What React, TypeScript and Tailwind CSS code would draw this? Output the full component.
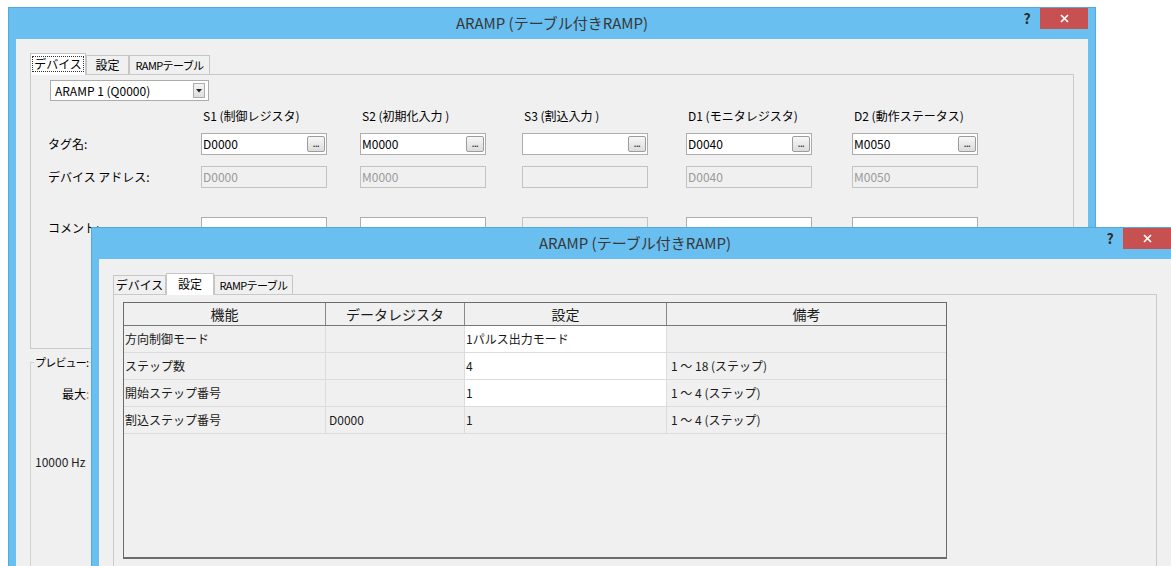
import type { ReactNode } from 'react'

const TITLE = 'ARAMP (テーブル付きRAMP)'

interface TabDef {
  label: string
  w: string
  active?: boolean
  focus?: boolean
  narrow?: boolean
}

function TitleBar() {
  return (
    <div className="relative flex h-[31px] shrink-0 items-center justify-center">
      <span className="text-[15px] text-[#383838]">{TITLE}</span>
      <div className="absolute right-0 top-0 flex">
        <div className="flex h-[21px] w-[26px] items-center justify-center text-[14px] font-bold text-[#2b2b2b]">?</div>
        <div className="flex h-[21px] w-[48px] items-center justify-center bg-[#c75050]">
          <svg width="9" height="9" viewBox="0 0 9 9">
            <path d="M1 1L8 8M8 1L1 8" stroke="#fff" strokeWidth="1.7" />
          </svg>
        </div>
      </div>
    </div>
  )
}

function Window({ pos, children }: { pos: string; children: ReactNode }) {
  return (
    <div className={`absolute flex h-[660px] w-[1088px] flex-col border border-[#55a8dd] bg-[#69bff0] px-[7px] ${pos}`}>
      <TitleBar />
      <div className="flex flex-1 flex-col bg-[#f0f0f0] pl-[14px] pr-[14px] pt-[14px]">{children}</div>
    </div>
  )
}

function TabStrip({ tabs }: { tabs: TabDef[] }) {
  return (
    <div className="flex h-[21px] shrink-0 items-end whitespace-nowrap">
      {tabs.map((t) => {
        const text = t.narrow ? 'text-[11px] tracking-[-0.6px]' : 'text-[12px]'
        return t.active ? (
          <div key={t.label} className={`relative z-10 -mb-px flex h-[22px] items-center justify-center border border-b-0 border-[#c6c6c6] bg-white pb-[2px] ${text} ${t.w}`}>
            <span className={t.focus ? 'px-[1px] leading-[14px] outline-1 outline-dotted outline-[#333]' : ''}>{t.label}</span>
          </div>
        ) : (
          <div key={t.label} className={`flex h-[19px] items-center justify-center border border-b-0 border-[#c6c6c6] bg-[#f0f0f0] ${text} ${t.w}`}>
            {t.label}
          </div>
        )
      })}
    </div>
  )
}

function Browse() {
  return (
    <div className="flex h-[16px] w-[18px] shrink-0 items-end justify-center rounded-[2px] border border-[#9c9c9c] bg-gradient-to-b from-[#f7f7f7] to-[#dcdcdc] pb-[3px] text-[8px] font-bold leading-none tracking-[-0.5px] text-[#333]">
      ...
    </div>
  )
}

function Field({ value = '', disabled, browse }: { value?: string; disabled?: boolean; browse?: boolean }) {
  return (
    <div
      className={`flex h-[22px] w-[126px] items-center justify-between border pl-[1px] pr-[1px] text-[12px] ${
        disabled ? 'border-[#c2c2c2] bg-[#f0f0f0] text-[#9a9a9a]' : 'border-[#adadad] bg-white text-black'
      }`}
    >
      <span>{value}</span>
      {browse && <Browse />}
    </div>
  )
}

const columns = [
  { head: 'S1 (制御レジスタ)', tag: 'D0000', lockedComment: false },
  { head: 'S2 (初期化入力 )', tag: 'M0000', lockedComment: false },
  { head: 'S3 (割込入力 )', tag: '', lockedComment: true },
  { head: 'D1 (モニタレジスタ)', tag: 'D0040', lockedComment: false },
  { head: 'D2 (動作ステータス)', tag: 'M0050', lockedComment: false },
]

const gridCols = 'grid grid-cols-[153px_159px_162px_164px_166px_126px] items-center'

function DeviceWindow() {
  return (
    <Window pos="left-[8px] top-[7px]">
      <TabStrip
        tabs={[
          { label: 'デバイス', w: 'w-[56px]', active: true, focus: true },
          { label: '設定', w: 'w-[43px]' },
          { label: 'RAMPテーブル', w: 'w-[81px]', narrow: true },
        ]}
      />
      <div className="h-[275px] shrink-0 border border-[#c9c9c9] bg-[#f0f0f0] pl-[17px] pt-[5px] text-[12px]">
        <div className="ml-[2px] flex h-[21px] w-[159px] items-center justify-between border border-[#acacac] bg-white pl-[4px] pr-[3px]">
          <span>ARAMP 1 (Q0000)</span>
          <div className="flex h-[15px] w-[12px] items-center justify-center border border-[#acacac] bg-gradient-to-b from-[#f4f4f4] to-[#dedede]">
            <svg width="6" height="4" viewBox="0 0 6 4">
              <path d="M0 0H6L3 3.5Z" fill="#222" />
            </svg>
          </div>
        </div>
        <div className={`${gridCols} mt-[7px] h-[16px]`}>
          <span />
          {columns.map((c) => (
            <span key={c.head} className="pl-[2px] leading-[16px]">{c.head}</span>
          ))}
        </div>
        <div className={`${gridCols} mt-[9px]`}>
          <span>タグ名:</span>
          {columns.map((c) => (
            <Field key={c.head} value={c.tag} browse />
          ))}
        </div>
        <div className={`${gridCols} mt-[11px]`}>
          <span>デバイス アドレス:</span>
          {columns.map((c) => (
            <Field key={c.head} value={c.tag} disabled />
          ))}
        </div>
        <div className={`${gridCols} mt-[29px]`}>
          <span>コメント:</span>
          {columns.map((c) => (
            <Field key={c.head} disabled={c.lockedComment} />
          ))}
        </div>
      </div>
      <fieldset className="mt-[5px] h-[260px] w-[300px] border-l border-t border-[#d3d3d3] text-[12px]">
        <legend className="ml-[3px] px-[1px] text-[11px] tracking-[-0.8px]">プレビュー:</legend>
        <div className="ml-[31px] mt-[14px]">
          最大<span className="text-[#d08a2a]">:</span>
        </div>
        <div className="ml-[4px] mt-[50px] text-[#222]">10000 Hz</div>
      </fieldset>
    </Window>
  )
}

const rows: [string, string, string, string, boolean][] = [
  ['方向制御モード', '', '1パルス出力モード', '', true],
  ['ステップ数', '', '4', '1 ～ 18 (ステップ)', true],
  ['開始ステップ番号', '', '1', '1 ～ 4 (ステップ)', true],
  ['割込ステップ番号', 'D0000', '1', '1 ～ 4 (ステップ)', false],
]

function SettingsWindow() {
  return (
    <Window pos="left-[91px] top-[227px]">
      <TabStrip
        tabs={[
          { label: 'デバイス', w: 'w-[53px]' },
          { label: '設定', w: 'w-[48px]', active: true },
          { label: 'RAMPテーブル', w: 'w-[79px]', narrow: true },
        ]}
      />
      <div className="flex-1 border border-[#c9c9c9] bg-[#f0f0f0] pl-[9px] pt-[7px]">
        <div className="flex h-[257px] w-[824px] flex-col border border-b-2 border-[#6b6b6b] bg-[#f0f0f0] text-[#1a1a1a]">
          <div className="flex h-[23px] shrink-0 border-b border-[#777] text-[14px] leading-[22px]">
            <div className="w-[202px] border-r border-[#8a8a8a] text-center">機能</div>
            <div className="w-[139px] border-r border-[#8a8a8a] text-center">データレジスタ</div>
            <div className="w-[202px] border-r border-[#8a8a8a] text-center">設定</div>
            <div className="flex-1 text-center">備考</div>
          </div>
          {rows.map(([name, reg, value, note, editable]) => (
            <div key={name} className="flex h-[27px] shrink-0 border-b border-[#dcdcdc] text-[12px]">
              <div className="flex w-[202px] items-center border-r border-[#dcdcdc] pl-[1px]">{name}</div>
              <div className="flex w-[139px] items-center border-r border-[#dcdcdc] pl-[3px]">{reg}</div>
              <div className={`flex w-[202px] items-center border-r border-[#dcdcdc] pl-[1px] ${editable ? 'bg-white' : ''}`}>{value}</div>
              <div className="flex flex-1 items-center pl-[4px]">{note}</div>
            </div>
          ))}
        </div>
      </div>
    </Window>
  )
}

export default function App() {
  return (
    <div className="relative h-[566px] w-[1171px] overflow-hidden bg-white font-['Noto_Sans_CJK_JP',sans-serif] text-black">
      <DeviceWindow />
      <SettingsWindow />
    </div>
  )
}
